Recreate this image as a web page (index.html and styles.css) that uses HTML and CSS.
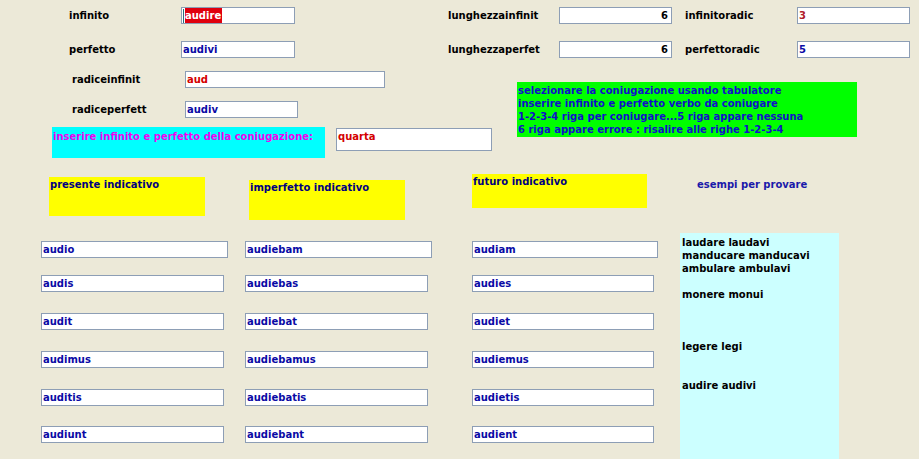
FILE: index.html
```html
<!DOCTYPE html>
<html lang="it">
<head>
<meta charset="utf-8">
<title>coniugazione</title>
<link rel="stylesheet" href="styles.css">
</head>
<body>
<div class="form">
  <div class="row r1">
    <div class="lbl l-a">infinito</div>
    <div class="tb w114 red"><span class="caret"></span><span class="sel">audire</span></div>
    <div class="lbl l-b">lunghezzainfinit</div>
    <div class="tb w113 num">6</div>
    <div class="lbl l-c">infinitoradic</div>
    <div class="tb w113 dred">3</div>
  </div>
  <div class="row r2">
    <div class="lbl l-a">perfetto</div>
    <div class="tb w114">audivi</div>
    <div class="lbl l-b">lunghezzaperfet</div>
    <div class="tb w113 num">6</div>
    <div class="lbl l-c">perfettoradic</div>
    <div class="tb w113">5</div>
  </div>

  <div class="mid">
    <div class="midleft">
      <div class="row">
        <div class="lbl l-d">radiceinfinit</div>
        <div class="tb w200 red">aud</div>
      </div>
      <div class="row r4">
        <div class="lbl l-d">radiceperfett</div>
        <div class="tb w113">audiv</div>
      </div>
      <div class="row r5">
        <div class="note-cyan">inserire infinito e perfetto della coniugazione:</div>
        <div class="tb tall red">quarta</div>
      </div>
    </div>
    <div class="note-green">selezionare la coniugazione usando tabulatore<br>inserire infinito e perfetto verbo da coniugare<br>1-2-3-4 riga per coniugare...5 riga appare nessuna<br>6 riga appare errore : risalire alle righe 1-2-3-4</div>
  </div>

  <div class="heads">
    <div class="yel y1">presente indicativo</div>
    <div class="yel y2">imperfetto indicativo</div>
    <div class="yel y3">futuro indicativo</div>
    <div class="esempi">esempi per provare</div>
  </div>

  <div class="lower">
    <div class="grid">
      <div class="tb w187">audio</div>
      <div class="tb w187">audiebam</div>
      <div class="tb w186">audiam</div>
      <div class="tb w183">audis</div>
      <div class="tb w183">audiebas</div>
      <div class="tb w182">audies</div>
      <div class="tb w183">audit</div>
      <div class="tb w183">audiebat</div>
      <div class="tb w182">audiet</div>
      <div class="tb w183">audimus</div>
      <div class="tb w183">audiebamus</div>
      <div class="tb w182">audiemus</div>
      <div class="tb w183">auditis</div>
      <div class="tb w183">audiebatis</div>
      <div class="tb w182">audietis</div>
      <div class="tb w183">audiunt</div>
      <div class="tb w183">audiebant</div>
      <div class="tb w182">audient</div>
    </div>
    <div class="examples">laudare laudavi
manducare manducavi
ambulare ambulavi

monere monui



legere legi


audire audivi</div>
  </div>
</div>
</body>
</html>
```
FILE: styles.css
```css
html, body {
  margin: 0;
  padding: 0;
  background: #ece9d8;
  overflow: hidden;
}
body {
  width: 919px;
  height: 459px;
  font-family: "DejaVu Sans", Tahoma, sans-serif;
  font-weight: bold;
  font-size: 10px;
  color: #000;
}
.form {
  padding-top: 7px;
}
.row {
  display: flex;
  align-items: center;
}
.r2 { margin-top: 17px; }
.r4 { margin-top: 13px; }
.r5 { margin-top: 9px; align-items: flex-start; }

.lbl { white-space: nowrap; }
.l-a { margin-left: 69px; width: 112px; }
.l-b { margin-left: 153px; width: 111px; }
.l-c { margin-left: 13px; width: 112px; }
.l-d { margin-left: 72px; width: 113px; }

.tb {
  box-sizing: border-box;
  height: 17px;
  background: #fff;
  border: 1px solid #8d9eb5;
  color: #0a0aa5;
  padding: 0 1px;
  line-height: 15px;
  white-space: nowrap;
  overflow: hidden;
  display: flex;
  align-items: center;
}
.w114 { width: 114px; }
.w113 { width: 113px; }
.w200 { width: 200px; }
.w187 { width: 187px; }
.w186 { width: 186px; }
.w183 { width: 183px; }
.w182 { width: 182px; }
.num { justify-content: flex-end; padding-right: 3px; color: #000; }
.red { color: #d40000; }
.dred { color: #b0202a; }
.tall {
  width: 156px;
  height: 23px;
  margin-left: 11px;
  margin-top: 1px;
  align-items: flex-start;
  padding-top: 0;
}
.caret {
  width: 1px;
  height: 14px;
  background: #2b6f80;
  margin-right: 1px;
}
.sel {
  background: #e0000e;
  color: #fff;
  padding-right: 1px;
}

.mid {
  display: flex;
  align-items: flex-start;
  margin-top: 13px;
}
.midleft { width: 517px; }
.note-cyan {
  margin-left: 52px;
  width: 273px;
  height: 31px;
  box-sizing: border-box;
  background: #00ffff;
  color: #f000f0;
  padding: 4px 1px 0;
  white-space: nowrap;
}
.note-green {
  margin-top: 11px;
  width: 340px;
  height: 55px;
  box-sizing: border-box;
  background: #00ff00;
  color: #1010c8;
  padding: 2px 1px;
  line-height: 13px;
  white-space: nowrap;
}

.heads {
  display: flex;
  align-items: flex-start;
  margin-top: 16px;
  height: 46px;
}
.yel {
  background: #ffff00;
  color: #000080;
  box-sizing: border-box;
  padding: 2px 1px;
  white-space: nowrap;
}
.y1 { margin-left: 49px; margin-top: 3px; width: 156px; height: 39px; }
.y2 { margin-left: 44px; margin-top: 6px; width: 156px; height: 40px; }
.y3 { margin-left: 67px; width: 175px; height: 34px; }
.esempi {
  margin-left: 50px;
  margin-top: 5px;
  color: #1a1aaa;
  white-space: nowrap;
}

.lower {
  display: flex;
  align-items: flex-start;
  margin-top: 13px;
}
.grid {
  margin-left: 41px;
  padding-top: 8px;
  display: grid;
  grid-template-columns: 204px 227px 186px;
  grid-template-rows: 34px 38px 38px 38px 37px 17px;
  align-items: start;
}
.examples {
  margin-left: 22px;
  width: 159px;
  height: 226px;
  box-sizing: border-box;
  background: #ccffff;
  padding: 3px 2px;
  line-height: 13px;
  white-space: pre;
  color: #000;
}
```
